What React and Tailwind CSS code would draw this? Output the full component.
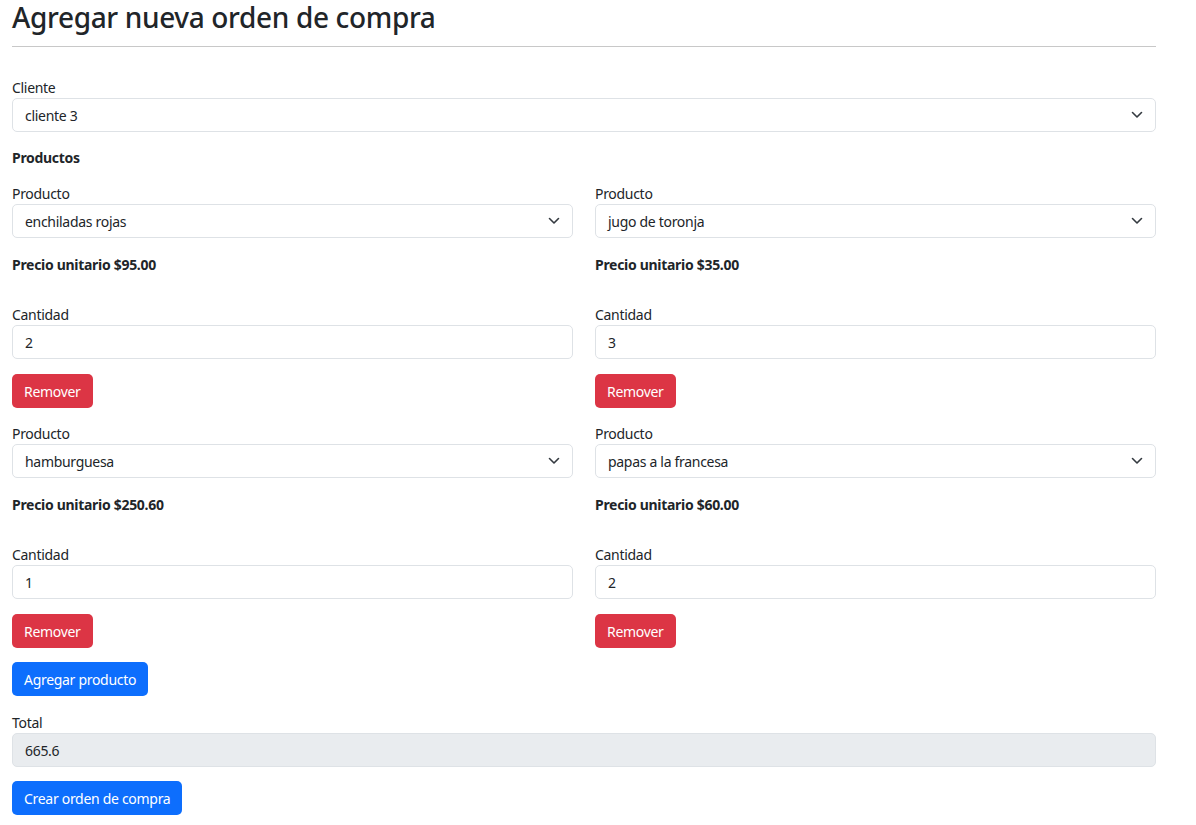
import { useState } from 'react';

const productos = [
    { nombre: 'enchiladas rojas', precio: '$95.00', cantidad: '2' },
    { nombre: 'jugo de toronja', precio: '$35.00', cantidad: '3' },
    { nombre: 'hamburguesa', precio: '$250.60', cantidad: '1' },
    { nombre: 'papas a la francesa', precio: '$60.00', cantidad: '2' },
];

function Chevron() {
    return (
        <svg className="absolute right-[13px] top-1/2 -translate-y-1/2 pointer-events-none" width="12" height="8" viewBox="0 0 12 8" fill="none">
            <path d="M1.5 1.5l4.5 4.5 4.5-4.5" stroke="#343a40" strokeWidth="1.6" strokeLinecap="round" strokeLinejoin="round" />
        </svg>
    );
}

function Select({ value }) {
    return (
        <div className="relative">
            <div className="h-[34px] border border-[#dee2e6] rounded-[5px] bg-white px-[12px] flex items-center text-[14px] text-[#212529]">
                {value}
            </div>
            <Chevron />
        </div>
    );
}

function Input({ value, disabled }) {
    return (
        <div className={`h-[34px] border border-[#dee2e6] rounded-[5px] px-[12px] flex items-center text-[14px] text-[#212529] ${disabled ? 'bg-[#e9ecef]' : 'bg-white'}`}>
            {value}
        </div>
    );
}

function Label({ children }) {
    return <div className="text-[14px] leading-[21px] text-[#212529]">{children}</div>;
}

export default function App() {
    const [items] = useState(productos);

    return (
        <div className="bg-white min-h-screen text-[#212529] tracking-[-0.3px]" style={{ fontFamily: '"Noto Sans", sans-serif' }}>
            <div className="w-[1144px] ml-[12px]">
                <h1 className="text-[28px] leading-[34px] font-medium tracking-[-0.35px]">Agregar nueva orden de compra</h1>
                <hr className="mt-[12px] border-t border-[#c8c8c8]" />

                <div className="mt-[30px]">
                    <Label>Cliente</Label>
                    <Select value="cliente 3" />
                </div>

                <div className="mt-[15px] text-[14px] leading-[21px] font-bold">Productos</div>

                <div className="mt-[15px] grid grid-cols-2 gap-x-[22px] gap-y-[15px]">
                    {items.map((p, i) => (
                        <div key={i}>
                            <Label>Producto</Label>
                            <Select value={p.nombre} />
                            <div className="mt-[16px] text-[14px] leading-[21px] font-bold">Precio unitario {p.precio}</div>
                            <div className="mt-[29px]">
                                <Label>Cantidad</Label>
                                <Input value={p.cantidad} />
                            </div>
                            <button className="mt-[15px] h-[34px] px-[12px] rounded-[5px] bg-[#dc3545] text-white text-[14px]">Remover</button>
                        </div>
                    ))}
                </div>

                <button className="mt-[14px] h-[34px] px-[12px] rounded-[5px] bg-[#0d6efd] text-white text-[14px]">Agregar producto</button>

                <div className="mt-[16px]">
                    <Label>Total</Label>
                    <Input value="665.6" disabled />
                </div>

                <button className="mt-[14px] h-[34px] px-[12px] rounded-[5px] bg-[#0d6efd] text-white text-[14px]">Crear orden de compra</button>
            </div>
        </div>
    );
}
